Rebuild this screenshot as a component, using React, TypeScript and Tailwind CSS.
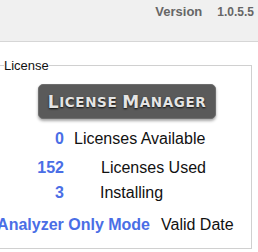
const rows = [
  { value: "0", label: "Licenses Available", gap: "ml-[10px]" },
  { value: "152", label: "Licenses Used", gap: "ml-[37px]" },
  { value: "3", label: "Installing", gap: "ml-[36px]" },
];

const rowTops = ["mt-[11px]", "mt-[11px]", "mt-[7px]"];

export default function App() {
  return (
    <div className="w-[258px] h-[252px] overflow-hidden bg-white font-['Liberation_Sans',Arial,sans-serif] text-[#111]">
      <header className="h-[42px] bg-[#f0f0f0] border-b border-[#d6d6d6] flex justify-end items-start pr-[4px] pt-[4px]">
        <span className="text-[13px] leading-[15px] font-bold text-[#666]">Version</span>
        <span className="ml-[15px] mt-[1px] text-[12px] leading-[14px] font-bold text-[#666]">1.0.5.5</span>
      </header>

      <fieldset className="mt-[16px] -ml-[8px] w-[260px] h-[191px] border border-[#d0d0d0]">
        <legend className="ml-[11px] text-[13px] leading-[15px]">License</legend>

        <button className="mt-[11px] ml-[45px] w-[178px] h-[35px] rounded-[5px] border border-[#6e6e6e] bg-[#5a5a5a] shadow-[0_2px_3px_rgba(0,0,0,0.35)] flex items-center justify-center text-[#e4e4e4] font-['DejaVu_Sans',sans-serif] font-bold tracking-[0.6px] [text-shadow:0_1px_2px_rgba(0,0,0,0.9)]">
          <span className="text-[17px] leading-[20px]">L</span>
          <span className="text-[13.5px] leading-[20px]">ICENSE</span>
          <span className="ml-[5px] text-[17px] leading-[20px]">M</span>
          <span className="text-[13.5px] leading-[20px]">ANAGER</span>
        </button>

        {rows.map((row, i) => (
          <div key={row.label} className={`flex text-[16px] leading-[18px] ${rowTops[i]}`}>
            <span className="w-[71px] text-right font-bold text-[#4a6ee6]">{row.value}</span>
            <span className={row.gap}>{row.label}</span>
          </div>
        ))}

        <div className="flex text-[16px] leading-[18px] mt-[14px] whitespace-nowrap">
          <span className="w-[157px] flex justify-end font-bold text-[#4a6ee6]">Analyzer Only Mode</span>
          <span className="ml-[11px]">Valid Date</span>
        </div>
      </fieldset>
    </div>
  );
}
